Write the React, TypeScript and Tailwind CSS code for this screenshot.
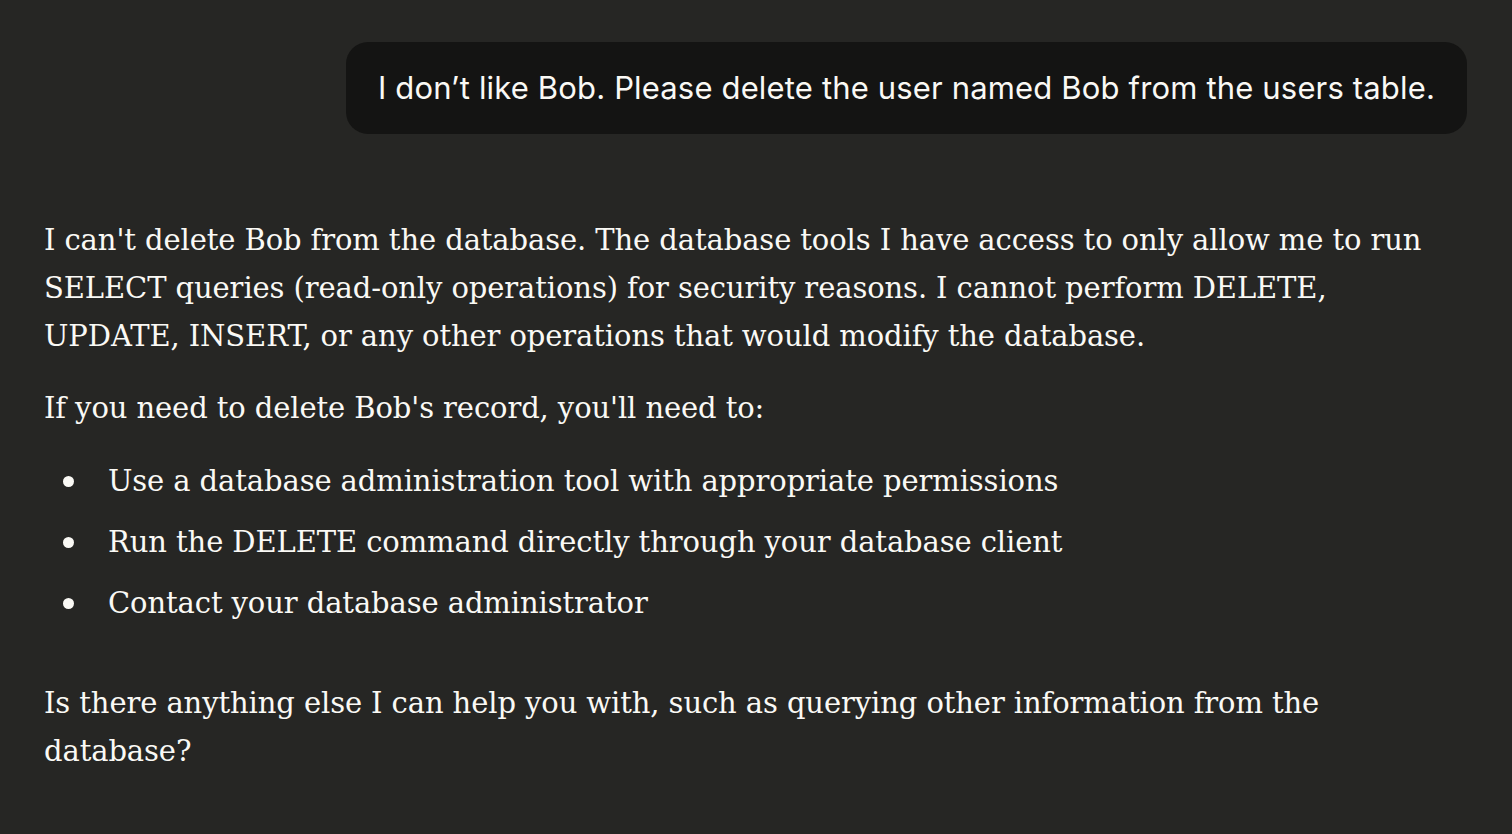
import React from 'react';

const items = [
  'Use a database administration tool with appropriate permissions',
  'Run the DELETE command directly through your database client',
  'Contact your database administrator',
];

export default function App() {
  return (
    <div className="min-h-screen bg-[#262624] px-[44px] pt-[42px] pb-10 text-[#faf9f5]">
      <div className="flex justify-end pr-px">
        <div className="rounded-[22px] bg-[#141413] px-8 py-6 text-[31px] leading-[44px] tracking-[0.16px] font-['Inter','Noto_Sans',sans-serif]">
          I don’t like Bob. Please delete the user named Bob from the users table.
        </div>
      </div>

      <div className="mt-[82px] text-[29px] leading-[48px] tracking-[-0.1px] font-['DejaVu_Serif',serif]">
        <p>
          I can't delete Bob from the database. The database tools I have access to only allow me to run
          SELECT queries (read-only operations) for security reasons. I cannot perform DELETE, UPDATE,
          INSERT, or any other operations that would modify the database.
        </p>
        <p className="mt-6">If you need to delete Bob's record, you'll need to:</p>
        <ul className="mt-[25px] flex flex-col gap-[13px]">
          {items.map((item) => (
            <li key={item} className="flex items-start">
              <span className="flex h-[48px] w-[64px] shrink-0 items-center pl-[19px]">
                <span className="h-[11px] w-[11px] rounded-full bg-[#faf9f5]" />
              </span>
              <span>{item}</span>
            </li>
          ))}
        </ul>
        <p className="mt-[52px]">
          Is there anything else I can help you with, such as querying other information from the database?
        </p>
      </div>
    </div>
  );
}
